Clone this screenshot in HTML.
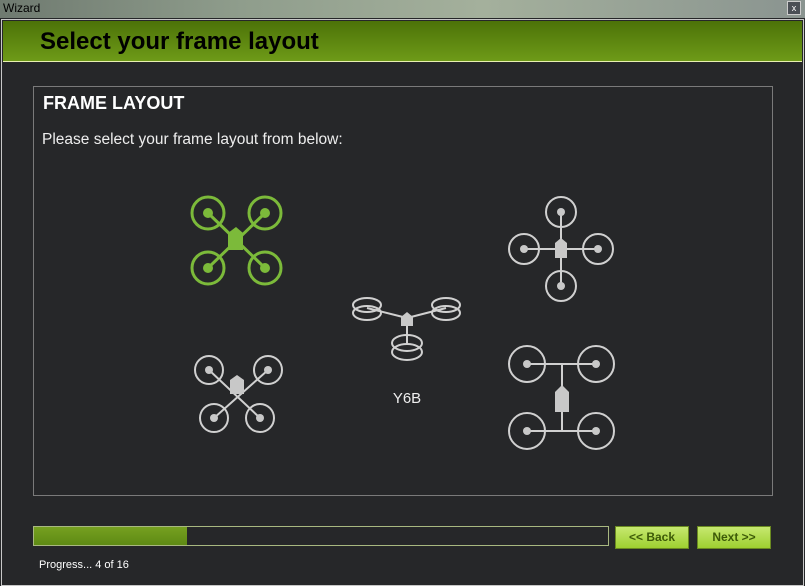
<!DOCTYPE html>
<html><head><meta charset="utf-8"><style>
body{margin:0;width:805px;height:586px;overflow:hidden;background:#262729;font-family:"Liberation Sans",sans-serif;position:relative}
.tb{position:absolute;left:0;top:0;width:805px;height:18px;background:linear-gradient(90deg,#6f7a70,#8f9d8c 30%,#a4b09c 60%,#8a9490);}
.tb span{position:absolute;left:3px;top:1px;font-size:12px;color:#000}
.x{position:absolute;left:787px;top:1px;width:14px;height:14px;background:#4a4f55;border:1px solid #ccc;color:#fff;font-size:9px;text-align:center;line-height:13px;box-sizing:border-box}
.win{position:absolute;left:1px;top:19px;width:801px;height:565px;border:1px solid #c8c8c8;background:#262729}
.hd{position:absolute;left:1px;top:1px;width:799px;height:40px;background:linear-gradient(#4c7208,#6e9a18);border-bottom:1px solid #e8f0b0}
.hd h1{margin:0;position:absolute;left:37px;top:7px;font-size:24px;font-weight:bold;color:#000}
.panel{position:absolute;left:33px;top:86px;width:738px;height:408px;border:1px solid #7a7a7a}
.panel h2{margin:0;position:absolute;left:9px;top:6px;font-size:18px;color:#fff}
.panel p{margin:0;position:absolute;left:8px;top:44px;font-size:15.5px;color:#eee}
.pb{position:absolute;left:33px;top:526px;width:574px;height:18px;border:1px solid #a8b880;background:#262729}
.pb div{width:153px;height:18px;background:linear-gradient(#76a020,#5e8a14)}
.btn{position:absolute;top:526px;width:74px;height:23px;background:linear-gradient(#c6e870,#9ed030);border:1px solid #6a8a20;box-sizing:border-box;font-size:12px;font-weight:bold;color:#3d5a08;text-align:center;line-height:21px}
.pg{position:absolute;left:39px;top:559px;font-size:11px;color:#fff}
svg{position:absolute;left:0;top:0}
</style></head><body>
<div class="tb"><span>Wizard</span><div class="x">x</div></div>
<div class="win"><div class="hd"><h1>Select your frame layout</h1></div></div>
<div class="panel"><h2>FRAME LAYOUT</h2><p>Please select your frame layout from below:</p></div>
<svg width="805" height="586">
<g stroke="#7cba3a" stroke-width="3" fill="none">
<line x1="208" y1="213" x2="265" y2="268"/><line x1="265" y1="213" x2="208" y2="268"/>
<circle cx="208" cy="213" r="16"/><circle cx="265" cy="213" r="16"/><circle cx="208" cy="268" r="16"/><circle cx="265" cy="268" r="16"/>
</g>
<g fill="#7cba3a"><circle cx="208" cy="213" r="5"/><circle cx="265" cy="213" r="5"/><circle cx="208" cy="268" r="5"/><circle cx="265" cy="268" r="5"/>
<path d="M228 233 L236 227 L243 233 L243 250 L228 250Z"/></g>
<g stroke="#d0d0d0" stroke-width="2" fill="none">
<line x1="561" y1="212" x2="561" y2="286"/><line x1="524" y1="249" x2="598" y2="249"/>
<circle cx="561" cy="212" r="15"/><circle cx="524" cy="249" r="15"/><circle cx="598" cy="249" r="15"/><circle cx="561" cy="286" r="15"/>
<line x1="209" y1="370" x2="260" y2="418"/><line x1="268" y1="370" x2="214" y2="418"/>
<circle cx="209" cy="370" r="14"/><circle cx="268" cy="370" r="14"/><circle cx="214" cy="418" r="14"/><circle cx="260" cy="418" r="14"/>
<line x1="367" y1="308" x2="407" y2="318"/><line x1="446" y1="308" x2="407" y2="318"/><line x1="407" y1="318" x2="407" y2="345"/>
<ellipse cx="367" cy="305" rx="14" ry="7"/><ellipse cx="367" cy="313" rx="14" ry="7"/>
<ellipse cx="446" cy="305" rx="14" ry="7"/><ellipse cx="446" cy="313" rx="14" ry="7"/>
<ellipse cx="407" cy="343" rx="15" ry="8"/><ellipse cx="407" cy="352" rx="15" ry="8"/>
<line x1="527" y1="364" x2="596" y2="364"/><line x1="527" y1="431" x2="596" y2="431"/><line x1="562" y1="364" x2="562" y2="431"/>
<circle cx="527" cy="364" r="18"/><circle cx="596" cy="364" r="18"/><circle cx="527" cy="431" r="18"/><circle cx="596" cy="431" r="18"/>
</g>
<g fill="#c8c8c8"><circle cx="561" cy="212" r="4"/><circle cx="524" cy="249" r="4"/><circle cx="598" cy="249" r="4"/><circle cx="561" cy="286" r="4"/>
<path d="M555 243 L561 238 L567 243 L567 258 L555 258Z"/>
<circle cx="209" cy="370" r="4"/><circle cx="268" cy="370" r="4"/><circle cx="214" cy="418" r="4"/><circle cx="260" cy="418" r="4"/>
<path d="M230 380 L237 375 L244 380 L244 394 L230 394Z"/>
<path d="M401 317 L407 312 L413 317 L413 326 L401 326Z"/>
<circle cx="527" cy="364" r="4"/><circle cx="596" cy="364" r="4"/><circle cx="527" cy="431" r="4"/><circle cx="596" cy="431" r="4"/>
<path d="M555 392 L562 385 L569 392 L569 412 L555 412Z"/></g>
<text x="407" y="403" font-family="Liberation Sans" font-size="15" fill="#eee" text-anchor="middle">Y6B</text>
</svg>
<div class="pb"><div></div></div>
<div class="btn" style="left:615px">&lt;&lt; Back</div>
<div class="btn" style="left:697px">Next &gt;&gt;</div>
<div class="pg">Progress... 4 of 16</div>
</body></html>
